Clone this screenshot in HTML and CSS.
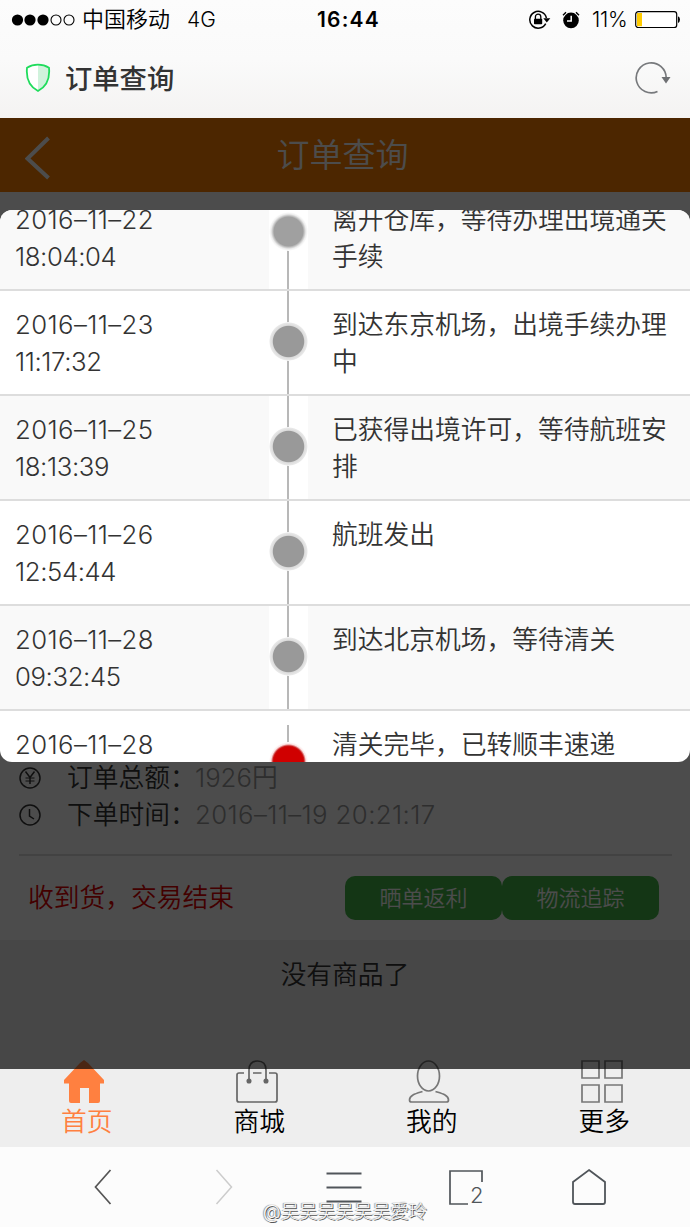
FILE: index.html
```html
<!DOCTYPE html>
<html lang="zh-CN">
<head>
<meta charset="utf-8">
<title>订单查询</title>
<link rel="stylesheet" href="styles.css">
</head>
<body>
<div class="phone">
  <div class="chrome">
    <div class="status">
      <svg class="signal" width="64" height="14" viewBox="0 0 64 14"><g fill="#000"><circle cx="6.5" cy="7" r="5.6"/><circle cx="19" cy="7" r="5.6"/><circle cx="32" cy="7" r="5.6"/></g><g fill="none" stroke="#000" stroke-width="1.1"><circle cx="45" cy="7" r="5"/><circle cx="58" cy="7" r="5"/></g></svg>
      <span class="carrier">中国移动</span>
      <span class="network">4G</span>
      <span class="clock">16:44</span>
      <svg class="lock" width="23" height="20" viewBox="0 0 23 20"><path d="M17.7 13.6A8.4 8.4 0 1 1 18.4 8" fill="none" stroke="#000" stroke-width="1.5"/><path d="M15.3 8.3h7l-3.5 4.2z"/><rect x="6" y="8.7" width="8.2" height="5.6" rx=".8"/><path d="M7.4 9V6.8a2.7 2.7 0 0 1 5.4 0V9" fill="none" stroke="#000" stroke-width="1.3"/></svg>
      <svg class="alarm" width="18" height="18" viewBox="0 0 18 18"><circle cx="9" cy="9.4" r="7.8"/><path d="M1 4.2 4 1.2M14 1.2l3 3" stroke="#000" stroke-width="1.4"/><path d="M9.2 4.8v5.3H5" fill="none" stroke="#fff" stroke-width="1.5"/></svg>
      <span class="percent">11%</span>
      <svg class="battery" width="46" height="18" viewBox="0 0 46 18"><rect x=".7" y=".7" width="41" height="15.8" rx="2.6" fill="#fff" stroke="#000" stroke-width="1.2"/><rect x="2" y="2" width="5" height="13.2" fill="#ffcb00"/><path d="M43 5.3q2 .8 2 3.3t-2 3.3z"/></svg>
    </div>
    <div class="titlebar">
      <svg width="26" height="30" viewBox="0 0 26 30"><path d="M13 1.7c4 0 8 1.2 11 3.1 1 10-1.600 18.200-11 23.200C3.600 23 1 14.800 2 4.800 5 2.900 9 1.700 13 1.700z" fill="#fff"/><path d="M13 2c4 0 8 1 11 3 1 10-2 18-11 23z" fill="#d0f2dc"/><path d="M13 1.700c4 0 8 1.200 11 3.100 1 10-1.600 18.200-11 23.200C3.600 23 1 14.800 2 4.800 5 2.900 9 1.700 13 1.700z" fill="none" stroke="#1fdc5c" stroke-width="1.800"/></svg>
      <h1 class="page-title">订单查询</h1>
      <svg class="reload" width="36" height="33" viewBox="0 0 36 33"><path d="M22.500 30.500A15 15 0 1 1 31.200 17" fill="none" stroke="#77797c" stroke-width="1.700"/><path d="M26.500 16h9l-4.500 6.500z" fill="#6e7073"/></svg>
    </div>
  </div>

  <div class="webview">
    <header class="app-header">
      <svg class="back" width="26" height="44" viewBox="0 0 26 44"><path d="M23.500 2 2.500 22.500 23.500 42" fill="none" stroke="#fff" stroke-width="4"/></svg>
      <span>订单查询</span>
    </header>
    <main class="order">
      <div class="info">
        <svg width="22" height="22" viewBox="0 0 22 22" fill="none" stroke="#333" stroke-width="1.500"><circle cx="11" cy="11" r="10"/><path d="M6.500 4.500 11 10.500l4.500-6M11 10.500V17" /><path d="M6.500 11h9M6.500 14h9" stroke-width="1"/></svg>
        <span class="label">订单总额：</span><span class="value">1926円</span>
      </div>
      <div class="info">
        <svg width="22" height="22" viewBox="0 0 22 22" fill="none" stroke="#333" stroke-width="1.500"><circle cx="11" cy="11" r="10"/><path d="M10.500 5v7l4.500 3"/></svg>
        <span class="label">下单时间：</span><span class="value date">2016–11–19 20:21:17</span>
      </div>
      <div class="actions">
        <span class="state">收到货，交易结束</span>
        <span class="btn">晒单返利</span>
        <span class="btn">物流追踪</span>
      </div>
    </main>
    <div class="empty">没有商品了</div>
    <nav class="tabs">
      <div class="tab active"><svg width="42" height="43" viewBox="0 0 42 43"><path d="M21 0 25 3 41 20v3.500h-4V41q0 2-2 2h-9V28h-9v15H8q-2 0-2-2V23.500H1V20L17 3z" fill="#ff8040"/></svg><span>首页</span></div>
      <div class="tab"><svg width="42" height="43" viewBox="0 0 42 43" fill="none" stroke="#666" stroke-width="1.700"><path d="M8 13H3q-2 0-2 2v25q0 2 2 2h36q2 0 2-2V15q0-2-2-2h-6M17 13h8.500"/><path d="M13 21V10q0-9 8.500-9T30 10v11"/><circle cx="13" cy="21" r="1.700" fill="#666"/><circle cx="30" cy="21" r="1.700" fill="#666"/></svg><span>商城</span></div>
      <div class="tab"><svg width="42" height="43" viewBox="0 0 42 43" fill="none" stroke="#777" stroke-width="1.700"><ellipse cx="20.500" cy="16" rx="11" ry="15"/><path d="M14.500 31.500C8 33.500 1.500 35 1.500 40q0 2 2 2h35q2 0 2-2c0-5-6.500-6.500-13-8.500"/></svg><span>我的</span></div>
      <div class="tab"><svg width="42" height="43" viewBox="0 0 42 43" fill="none" stroke="#777" stroke-width="1.700"><path d="M1 1h17v17H1zM24 1h17v17H24zM1 25h17v17H1zM24 25h17v17H24z"/></svg><span>更多</span></div>
    </nav>

    <div class="overlay">
      <div class="dialog">
        <div class="track">
          <div class="step first"><div class="when"><span class="date">2016–11–22</span><br>18:04:04</div><div class="rail"><i></i></div><div class="what">离开仓库，等待办理出境通关手续</div></div>
          <div class="step"><div class="when"><span class="date">2016–11–23</span><br>11:17:32</div><div class="rail"><i></i></div><div class="what">到达东京机场，出境手续办理中</div></div>
          <div class="step"><div class="when"><span class="date">2016–11–25</span><br>18:13:39</div><div class="rail"><i></i></div><div class="what">已获得出境许可，等待航班安排</div></div>
          <div class="step"><div class="when"><span class="date">2016–11–26</span><br>12:54:44</div><div class="rail"><i></i></div><div class="what">航班发出</div></div>
          <div class="step"><div class="when"><span class="date">2016–11–28</span><br>09:32:45</div><div class="rail"><i></i></div><div class="what">到达北京机场，等待清关</div></div>
          <div class="step last"><div class="when"><span class="date">2016–11–28</span></div><div class="rail"><i></i></div><div class="what">清关完毕，已转顺丰速递</div></div>
        </div>
      </div>
    </div>
  </div>

  <footer class="toolbar">
    <svg width="20" height="38" viewBox="0 0 20 38" fill="none" stroke="#555" stroke-width="1.700"><path d="M17.500 2 2.500 19l15 17"/></svg>
    <svg width="20" height="38" viewBox="0 0 20 38" fill="none" stroke="#ccc" stroke-width="1.500"><path d="M2.500 2l15 17-15 17"/></svg>
    <svg class="menu" width="36" height="38" viewBox="0 0 36 38" stroke="#50555a" stroke-width="1.800"><path d="M.5 5.500h35M.5 19.500h35M.5 33.500h35"/></svg>
    <div class="windows"><svg width="36" height="38" viewBox="0 0 36 38" fill="none" stroke="#50555a" stroke-width="1.700"><path d="M34 14V3H2v33h18"/></svg><span>2</span></div>
    <svg width="36" height="38" viewBox="0 0 36 38" fill="none" stroke="#50555a" stroke-width="1.800"><path d="M18 2 34 14v20q0 2-2 2H4q-2 0-2-2V14z"/></svg>
    <div class="watermark">@吴吴吴吴吴吴愛玲</div>
  </footer>
</div>
</body>
</html>
```

FILE: styles.css
```css
* { box-sizing: border-box; }
body {
  margin: 0;
  background: #fcfcfc;
  font-family: Inter, "Noto Sans CJK SC", sans-serif;
  font-weight: 350;
  color: #000;
}
svg { display: block; flex: none; }
.phone { width: 690px; height: 1227px; overflow: hidden; }

.chrome { height: 118px; background: linear-gradient(#fcfcfc 0, #fafafa 60px, #f4f3f2 118px); }
.status { height: 39px; display: flex; align-items: center; padding-left: 11px; font-size: 21px; line-height: 39px; white-space: nowrap; }
.carrier { margin-left: 7px; width: 105px; font-size: 22px; }
.network { width: 130px; font-size: 21px; }
.clock { width: 211px; font-size: 21px; font-weight: 600; letter-spacing: 1.2px; }
.alarm { margin-left: 11px; }
.percent { margin-left: 12px; width: 43px; font-size: 21px; letter-spacing: -0.3px; }
.titlebar { height: 78px; display: flex; align-items: center; padding: 0 19px 0 25px; }
.page-title { margin: -3px auto 0 14px; font-size: 27.3px; font-weight: 500; color: #333; }
.reload { margin-top: -1px; }

.webview { position: relative; height: 1029px; background: #eee; overflow: hidden; }
.app-header { height: 74px; display: grid; grid-template-columns: 26px 1fr 31px; align-items: center; padding: 0 25px; background: #ff8000; color: #fff; font-size: 33px; line-height: 74px; text-align: center; }
.back { margin-top: 5px; }
.order { height: 748px; padding: 567px 18px 0 19px; background: #fff; font-size: 25.75px; }
.info { height: 37px; display: flex; align-items: center; line-height: 37px; white-space: nowrap; }
.label { margin-left: 26px; width: 128px; color: #333; }
.value { color: #999; }
.date { letter-spacing: 0.4px; }
.actions { margin-top: 21px; padding: 20px 13px 0 9px; border-top: 2px solid #ddd; display: flex; color: #e00000; line-height: 44px; }
.state { flex: 1; }
.btn { width: 157px; border-radius: 10px; background: #44b549; color: #fff; font-size: 22px; text-align: center; }
.empty { height: 120px; padding-top: 16px; color: #333; font-size: 25.75px; line-height: 37px; text-align: center; }
.tabs { display: grid; grid-template-columns: repeat(4, 1fr); }
.tab { display: flex; flex-direction: column; align-items: center; font-size: 25.75px; line-height: 37px; }
.tab svg { margin-right: 4px; }
.tab span { margin-left: 1px; }
.active { color: #ff8040; }

.overlay { position: absolute; inset: 0 0 auto; height: 951px; padding-top: 92px; background: rgba(0, 0, 0, .7); }
.dialog { height: 552px; overflow: hidden; border-radius: 12px; background: #fff; }
.track { margin-top: -26px; color: #333; font-size: 25.75px; line-height: 37px; }
.step { height: 105px; display: grid; grid-template-columns: 269px 39px 1fr; border-top: 2px solid #ddd; }
.step:nth-child(odd) { background: #f9f9f9; }
.when { padding: 14.5px 0 0 15px; letter-spacing: -0.4px; }
.what { padding: 15px 20px 0 24px; }
.rail { height: 103px; padding-top: 31px; background: linear-gradient(#b8b8b8, #b8b8b8) 18px 0 / 2px 100% no-repeat #fff; }
.rail i { display: block; width: 39px; height: 39px; border-radius: 50%; background: radial-gradient(circle, #999 15.200px, #dcdcdc 16.200px, #e8e8e8 18.500px, #fff 19.500px); }
.first .rail { padding-top: 26px; background-position: 18px 45px; }
.first .rail i { background: radial-gradient(circle, #a0a0a0 14.500px, #bbb 15.500px, #eee 17.500px, #fff 19.500px); }
.last .rail { margin-top: 14px; padding-top: 17px; }
.last .rail i { background: radial-gradient(circle, #d00000 14.500px, #c81818 15.500px, #fbe4e4 17.500px, #fff 19.500px); }

.toolbar { position: relative; height: 80px; padding: 0 40px 0 42px; display: grid; grid-template-columns: repeat(5, 1fr); align-items: center; justify-items: center; background: #fcfcfc; }
.menu { margin-right: 3px; }
.windows { position: relative; margin-right: 3px; }
.windows span { position: absolute; left: 22px; top: 14px; font-size: 22px; line-height: 26px; font-weight: 300; color: #50555a; }
.watermark { position: absolute; left: 263px; top: 51px; font-size: 18.300px; line-height: 27px; font-weight: 300; white-space: nowrap; color: #fff; text-shadow: 1px 1px 0 #555, -1px 0 1px #999, 0 0 1px #777; }
```
